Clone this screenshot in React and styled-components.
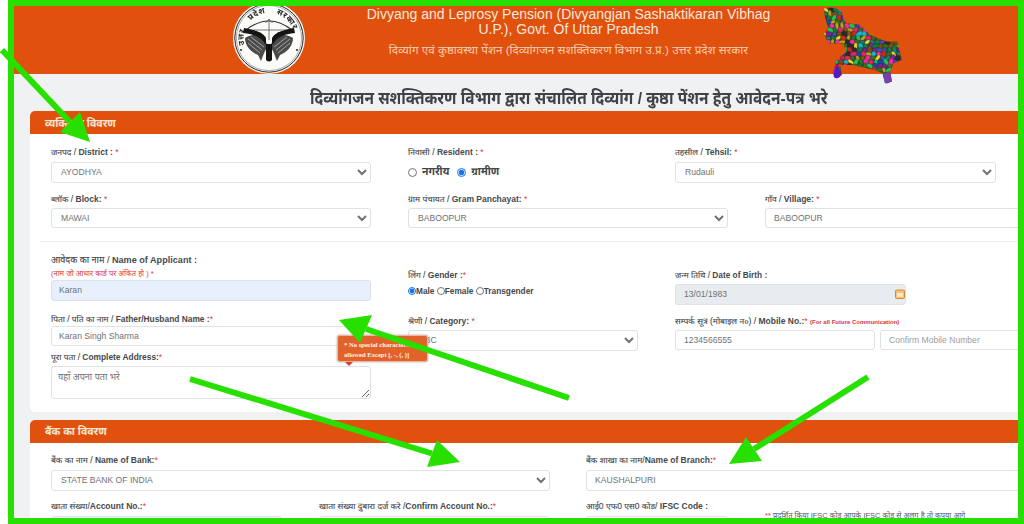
import React from "react";
import styled, { createGlobalStyle } from "styled-components";

const Global = createGlobalStyle`
  html, body { margin: 0; padding: 0; background: #fff; overflow: hidden; }
  * { box-sizing: border-box; }
`;
const FONT = `"Liberation Sans", "Noto Sans Devanagari", "Noto Sans", "Lohit Devanagari", sans-serif`;

const Page = styled.div`
  position: relative; width: 1024px; height: 524px; overflow: hidden;
  padding: 6px 0 0 14px; background: #fff; font-family: ${FONT}; color: #444;
`;
const Main = styled.div`width: 1040px; height: 560px; background: #eff1f3;`;
const Banner = styled.header`
  height: 68px; background: #e0510d; display: flex; flex-direction: column; align-items: center;
  padding: 1px 0 0 0; color: #f4e8df;
`;
const BannerLine = styled.div`
  width: 520px; margin-left: 69px; text-align: center; font-size: 14px; line-height: 15px;
`;
const BannerHindi = styled.div`
  margin: 5px 0 0 69px; font-size: 11.7px; line-height: 16px; color: #f7cdb0;
`;
const Title = styled.h1`
  margin: 0; height: 37px; padding: 14px 0 0 296px; font-size: 17px; line-height: 22px;
  font-weight: 700; color: #3f4246; white-space: nowrap;
`;
const TitleText = styled.span`display: inline-block; transform: scaleX(.908); transform-origin: left center;`;
const Card = styled.section`
  width: 1010px; margin: 0 0 8px 16px; background: #fff; border-radius: 5px; overflow: hidden;
`;
const CardHead = styled.div`
  height: 23px; background: #e0510d; padding: ${p => p.$pt || 1}px 15px 0; display: flex; align-items: center;
  color: #fde5d4; font-size: 10.5px; font-weight: 700;
`;
const Body = styled.div`padding: ${p => p.$pad ?? 12}px 0 12px 21px; height: ${p => p.$h}px;`;
const Row = styled.div`display: flex; gap: ${p => p.$gap ?? 37}px; margin-top: ${p => p.$top || 0}px;`;
const Stack = styled.div`display: flex; flex-direction: column; width: ${p => p.$w}px; flex: none;`;
const Field = styled.div`
  width: ${p => (p.$w ? p.$w + "px" : "auto")}; flex: none; margin-top: ${p => p.$top || 0}px;
`;
const Label = styled.label`
  display: block; height: 12px; margin-bottom: ${p => p.$gap ?? 4}px; font-size: ${p => p.$size || 8.5}px; line-height: 12px;
  color: #46494c; white-space: nowrap; -webkit-text-stroke: .12px #46494c;
  b { font-weight: 700; -webkit-text-stroke: 0; }
`;
const Star = styled.span`color: #dc3545; -webkit-text-stroke: 0;`;
const RedNote = styled.span`
  display: ${p => (p.$block ? "block" : "inline")}; color: ${p => p.$color || "#dc3545"};
  font-size: ${p => p.$size || 7.5}px; line-height: 11px; font-weight: ${p => p.$weight || 400};
  margin-top: ${p => p.$top || 0}px; margin-bottom: ${p => p.$bottom || 0}px; white-space: nowrap;
  -webkit-text-stroke: 0;
`;
const Muted = styled.span`color: #55585c;`;
const controlBase = `
  display: block; width: 100%; height: 20.5px; border: 1px solid #dee2e6; border-radius: 3px; background: #fff;
  font-family: ${FONT}; font-size: 8.6px; color: #6f7276; outline: none; margin: 0;
`;
const Select = styled.select`${controlBase} padding: 0 0 0 5px;`;
const Input = styled.input`
  ${controlBase} padding: 0 ${p => p.$pad ?? 8}px;
  background: ${p => p.$bg || "#fff"};
  &::placeholder { color: #9a9da1; opacity: 1; }
`;
const Area = styled.textarea`
  ${controlBase} height: 33px; padding: 5px 6px; resize: both; font-size: 9px;
  &::placeholder { color: #6f7276; opacity: 1; }
`;
const Divider = styled.hr`margin: 13px 0 12px -11px; border: 0; border-top: 1px solid #eeeff1; width: 990px;`;
const Radios = styled.div`
  display: flex; align-items: center; height: 20px; font-size: ${p => p.$size || 10.5}px; font-weight: 700; color: #44474a;
  label { display: flex; align-items: center; gap: ${p => p.$inner || 0}px; margin-right: ${p => p.$after || 0}px; }
`;
const Radio = styled.input.attrs({ type: "radio" })`
  margin: 0; width: ${p => p.$s || 9}px; height: ${p => p.$s || 9}px; accent-color: #1a73e8; flex: none;
`;
const DateWrap = styled.div`position: relative; width: 231px;`;
const Cal = styled.svg`position: absolute; right: 1px; top: 5px; width: 10px; height: 10px;`;
const Tip = styled.div`
  position: absolute; left: 337px; top: 335px; width: 91px; height: 27px; padding: 4px 0 0 6px;
  background: #e2622b; border: 1px solid #eeb49c; border-radius: 3px; box-shadow: 0 0 2px #999;
  color: #fff3ea; font-size: 6.6px; line-height: 9.5px; font-weight: 700; font-family: "Liberation Serif", serif;
  white-space: nowrap; overflow: hidden;
`;
const TipTail = styled.div`
  position: absolute; left: 345px; top: 362px; border: 4px solid transparent; border-top-color: #d93a3a; border-bottom: 0;
`;
const Frame = styled.div`
  position: absolute; left: 8px; top: 0; right: 0; bottom: 0; border: 6px solid #27e000; pointer-events: none;
`;
const Arrows = styled.svg`position: absolute; left: 0; top: 0; pointer-events: none;`;
const LogoSvg = styled.svg`position: absolute; left: 232.5px; top: 2px; width: 72px; height: 72px; filter: blur(.25px);`;
const MapSvg = styled.svg`position: absolute; left: 810px; top: 0; width: 110px; height: 90px; filter: blur(.3px);`;

const FISH = "M-24 0 C-20 -3 -12 -3 -9 -6 L-1 8 C-5 14 -6 18 -8 23 L-11 17 C-18 14 -24 8 -24 0Z";
const Logo = () => (
  <LogoSvg viewBox="-36 -36 72 72">
    <defs>
      <path id="ring" d="M-24 8 A25.3 25.3 0 1 1 24 8" fill="none" />
    </defs>
    <circle r="36" fill="#fbfbf8" />
    <circle r="34.2" fill="none" stroke="#222" strokeWidth="1" />
    <circle r="32.6" fill="none" stroke="#333" strokeWidth=".4" />
    <text fontSize="8" fontWeight="700" fill="#222" wordSpacing="8" letterSpacing=".5">
      <textPath href="#ring" startOffset="1">उत्तर प्रदेश सरकार</textPath>
    </text>
    <path d="M-23 -8 Q0 -26 23 -8" fill="none" stroke="#333" strokeWidth="1.1" />
    <path d="M-23 -8 H23 M0 -18 V2 M-3.5 -15 L0 -19 L3.5 -15" fill="none" stroke="#555" strokeWidth=".8" />
    <g>
      <path d={FISH} fill="#4a4a4a" />
      <path d={FISH} fill="#4a4a4a" transform="scale(-1 1)" />
      <path d="M-21 1 L-7 12 M-18 -1 L-5 9 M-21 5 L-9 15 M21 1 L7 12 M18 -1 L5 9 M21 5 L9 15" stroke="#ccc" strokeWidth=".7" />
    </g>
    <path d="M-25 -10 C-15 -8 -6 -6 -3 0 L-3 22 Q0 25 3 22 L3 0 C6 -6 15 -8 25 -10 L26 -5 C15 -4 8 -1 4 6 L-4 6 C-8 -1 -15 -4 -26 -5 Z" fill="#141414" />
    <circle cx="-28" cy="12" r="1" fill="#222" /><circle cx="28" cy="12" r="1" fill="#222" />
  </LogoSvg>
);

const COLORS = ["#1f7a33","#7b1fa2","#e0246c","#e6d531","#1547b8","#12b4d4","#8a5418","#0f7a4a","#cf2626","#3f51c5","#1cc45a","#2a2a2a","#b8a41e","#4c6a28","#ef2ea0","#12857a","#3d6a20","#7a4a1a"];
const MAP_PATH = "M42 25 L70 22 L95 35 L100 60 L110 70 L150 75 L180 105 L230 125 L262 125 L275 180 L250 190 L240 215 L245 245 L225 250 L218 220 L195 210 L130 195 L110 195 L90 195 L95 225 L80 235 L68 220 L80 180 L110 155 L100 130 L55 130 L42 100 L55 85 L45 50 Z";
const cells = [];
let seed = 11;
for (let y = 18; y < 255; y += 12) {
  for (let x = 36 + ((y * 3) % 13); x < 280; x += 15) {
    seed = (seed * 1103515245 + 12345) % 2147483648;
    const h = seed >> 8;
    cells.push({ x, y, c: COLORS[h % COLORS.length], r: h % 180, a: 7 + (h % 5), b: 5 + (h % 3) });
  }
}
const UpMap = () => (
  <MapSvg viewBox="0 0 330 270">
    <defs><clipPath id="up"><path d={MAP_PATH} /></clipPath></defs>
    <g clipPath="url(#up)">
      <rect width="330" height="270" fill="#3a4a22" />
      {cells.map((k, i) => (
        <ellipse key={i} cx={k.x} cy={k.y} rx={k.a} ry={k.b} fill={k.c} stroke="#222" strokeWidth=".6" transform={`rotate(${k.r} ${k.x} ${k.y})`} />
      ))}
    </g>
    <path d="M70 222 Q76 196 82 197 Q96 222 90 230 Q80 238 72 232Z" fill="#5b16c9" />
    <path d="M218 222 L240 215 L246 240 Q238 252 226 250Z" fill="#7b3fa8" />
  </MapSvg>
);

const Arrow = ({ from, tip, a, b }) => {
  const mid = [(a[0] + b[0]) / 2, (a[1] + b[1]) / 2];
  return (
    <g>
      <line x1={from[0]} y1={from[1]} x2={mid[0]} y2={mid[1]} stroke="#27e000" strokeWidth="6" />
      <polygon points={`${tip} ${a} ${b}`} fill="#27e000" />
    </g>
  );
};

export default function App() {
  return (
    <Page>
      <Global />
      <Main>
        <Banner>
          <BannerLine>Divyang and Leprosy Pension (Divyangjan Sashaktikaran Vibhag</BannerLine>
          <BannerLine>U.P.), Govt. Of Uttar Pradesh</BannerLine>
          <BannerHindi>दिव्यांग एवं कुष्ठावस्था पेंशन (दिव्यांगजन सशक्तिकरण विभाग उ.प्र.) उत्तर प्रदेश सरकार</BannerHindi>
        </Banner>
        <Title><TitleText>दिव्यांगजन सशक्तिकरण विभाग द्वारा संचालित दिव्यांग / कुष्ठा पेंशन हेतु आवेदन-पत्र भरे</TitleText></Title>

        <Card>
          <CardHead $pt={3}>व्यक्तिगत विवरण</CardHead>
          <Body $h={278}>
            <Row>
              <Field $w={320}>
                <Label>जनपद / <b>District :</b> <Star>*</Star></Label>
                <Select defaultValue="a"><option value="a">AYODHYA</option></Select>
              </Field>
              <Field $w={230}>
                <Label>निवासी / <b>Resident :</b> <Star>*</Star></Label>
                <Radios $inner={5} $after={8}>
                  <label><Radio name="res" $s={9} />नगरीय</label>
                  <label><Radio name="res" $s={9} defaultChecked />ग्रामीण</label>
                </Radios>
              </Field>
              <Field $w={321}>
                <Label>तहसील / <b>Tehsil:</b> <Star>*</Star></Label>
                <Select defaultValue="a"><option value="a">Rudauli</option></Select>
              </Field>
            </Row>
            <Row $top={10}>
              <Field $w={320}>
                <Label $gap={3}>ब्लॉक / <b>Block:</b> <Star>*</Star></Label>
                <Select defaultValue="a"><option value="a">MAWAI</option></Select>
              </Field>
              <Field $w={320}>
                <Label $gap={3}>ग्राम पंचायत / <b>Gram Panchayat:</b> <Star>*</Star></Label>
                <Select defaultValue="a"><option value="a">BABOOPUR</option></Select>
              </Field>
              <Field $w={260}>
                <Label $gap={3}>गाँव / <b>Village:</b> <Star>*</Star></Label>
                <Input readOnly value="BABOOPUR" />
              </Field>
            </Row>
            <Divider />
            <Row>
              <Stack $w={320}>
                <Label $gap={2} $size={9.1}>आवेदक का नाम / <b>Name of Applicant :</b></Label>
                <RedNote $block $bottom={1}>(नाम जो आधार कार्ड पर अंकित हो ) *</RedNote>
                <Input $pad={7} $bg="#e8f0fe" readOnly value="Karan" />
                <Field $top={12}>
                  <Label $gap={1} $size={8.4}>पिता / पति का नाम / <b>Father/Husband Name :</b><Star>*</Star></Label>
                  <Input $pad={7} readOnly value="Karan Singh Sharma" />
                </Field>
                <Field $top={5}>
                  <Label $gap={3} $size={8.4}>पूरा पता / <b>Complete Address:</b><Star>*</Star></Label>
                  <Area placeholder="यहाँ अपना पता भरे" />
                </Field>
              </Stack>
              <Stack $w={230}>
                <Field $top={15}>
                  <Label $gap={0}>लिंग / <b>Gender :</b><Star>*</Star></Label>
                  <Radios $size={8.3}>
                    <label><Radio name="g" $s={8} defaultChecked />Male&nbsp;</label>
                    <label><Radio name="g" $s={8} />Female&nbsp;</label>
                    <label><Radio name="g" $s={8} />Transgender</label>
                  </Radios>
                </Field>
                <Field $top={14}>
                  <Label $gap={3}>श्रेणी / <b>Category:</b> <Star>*</Star></Label>
                  <Select defaultValue="a"><option value="a">OBC</option></Select>
                </Field>
              </Stack>
              <Stack $w={345}>
                <Field $top={15}>
                  <Label $gap={3} $size={8.3}>जन्म तिथि / <b>Date of Birth :</b></Label>
                  <DateWrap>
                    <Input $bg="#e9ecef" readOnly value="13/01/1983" />
                    <Cal viewBox="0 0 10 10">
                      <rect x=".5" y="1" width="9" height="8.5" rx="1" fill="#f4c27c" stroke="#d98a2e" />
                      <rect x="2" y="4" width="6" height="4" fill="#fbe6c2" />
                    </Cal>
                  </DateWrap>
                </Field>
                <Field $top={10}>
                  <Label $gap={3}>सम्पर्क सूत्र (मोबाइल न०) / <b>Mobile No.:</b><Star>*</Star> <RedNote $size={6} $weight={700}>(For all Future Communication)</RedNote></Label>
                  <Row $gap={5}>
                    <Field $w={200}><Input readOnly value="1234566555" /></Field>
                    <Field $w={140}><Input placeholder="Confirm Mobile Number" /></Field>
                  </Row>
                </Field>
              </Stack>
            </Row>
          </Body>
        </Card>

        <Card>
          <CardHead>बैंक का विवरण</CardHead>
          <Body $h={120} $pad={11}>
            <Row $gap={36}>
              <Field $w={499}>
                <Label>बैंक का नाम / <b>Name of Bank:</b><Star>*</Star></Label>
                <Select defaultValue="a"><option value="a">STATE BANK OF INDIA</option></Select>
              </Field>
              <Field $w={440}>
                <Label>बैंक शाखा का नाम/<b>Name of Branch:</b><Star>*</Star></Label>
                <Input readOnly value="KAUSHALPURI" />
              </Field>
            </Row>
            <Row $top={9} $gap={37}>
              <Field $w={231}>
                <Label>खाता संख्या/<b>Account No.:</b><Star>*</Star></Label>
                <Input $bg="#e8f0fe" readOnly />
              </Field>
              <Field $w={230}>
                <Label>खाता संख्या दुबारा दर्ज करे /<b>Confirm Account No.:</b><Star>*</Star></Label>
                <Input readOnly />
              </Field>
              <Field $w={142}>
                <Label>आई0 एफ0 एस0 कोड/ <b>IFSC Code :</b></Label>
                <Input readOnly />
              </Field>
              <Field $w={260}>
                <RedNote $block $top={10}>** <Muted>प्रदर्शित किया IFSC कोड आपके IFSC कोड से अलग है तो कृपया आगे</Muted></RedNote>
              </Field>
            </Row>
          </Body>
        </Card>
      </Main>

      <Logo />
      <UpMap />
      <Tip>* No special characters<br />allowed Except [, -, (, )]</Tip>
      <TipTail />
      <Arrows width="1024" height="524" viewBox="0 0 1024 524">
        <Arrow from={[2, 50]} tip={[90, 142]} a={[60, 132]} b={[80, 112]} />
        <Arrow from={[569, 398]} tip={[339, 320]} a={[372, 315]} b={[360, 343]} />
        <Arrow from={[190, 379]} tip={[460, 462]} a={[437, 440]} b={[427, 467]} />
        <Arrow from={[868, 377]} tip={[729, 464]} a={[746, 437]} b={[762, 461]} />
      </Arrows>
      <Frame />
    </Page>
  );
}
